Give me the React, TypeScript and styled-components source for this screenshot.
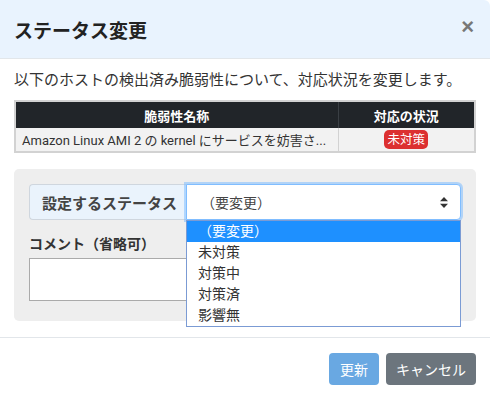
import React from 'react'
import styled, { createGlobalStyle } from 'styled-components'

const GlobalStyle = createGlobalStyle`
    * { box-sizing: border-box; }
    body {
        margin: 0;
        background: #fff;
        font-family: Roboto, "Noto Sans CJK JP", sans-serif;
        color: #333;
    }
`

const Modal = styled.div`
    width: 490px;
    height: 399px;
    background: #fff;
    border-top-right-radius: 6px;
    overflow: hidden;
`

const Header = styled.div`
    height: 59px;
    padding: 0 14px;
    display: flex;
    align-items: center;
    justify-content: space-between;
    background: #e9f3fe;
    border-bottom: 1px solid #e2e6ea;
`

const Title = styled.h5`
    margin: 0;
    font-size: 19px;
    font-weight: 700;
    color: #222;
    font-family: "Noto Sans CJK JP", sans-serif;
`

const Close = styled.span`
    font-size: 22px;
    font-weight: 700;
    color: #777;
    line-height: 1;
    margin-right: 2px;
    margin-top: -4px;
    font-family: "Liberation Sans", sans-serif;
`

const Body = styled.div`
    padding: 10px 14px 16px;
`

const Lead = styled.p`
    margin: 0 0 9px;
    font-size: 15px;
    line-height: 22px;
    color: #333;
`

const Table = styled.table`
    width: 100%;
    border-collapse: collapse;
    border: 2px solid #d2d2d2;
    font-size: 13px;
`

const Th = styled.th<{ w?: number }>`
    background: #212529;
    color: #fff;
    font-weight: 700;
    height: 27px;
    padding: 0 6px;
    text-align: center;
    border-right: 1px solid #3a3f44;
    width: ${p => (p.w ? `${p.w}px` : 'auto')};
    &:last-child { border-right: none; }
`

const Td = styled.td<{ center?: boolean }>`
    background: #f2f2f2;
    height: 24px;
    padding: 0 6px;
    color: #333;
    text-align: ${p => (p.center ? 'center' : 'left')};
    border-right: 1px solid #d2d2d2;
    white-space: nowrap;
    &:last-child { border-right: none; }
`

const Badge = styled.span`
    display: inline-block;
    background: #dc3030;
    color: #fff;
    font-size: 12.5px;
    line-height: 19px;
    padding: 0 3px;
    border-radius: 5px;
    vertical-align: middle;
`

const Panel = styled.div`
    margin-top: 16px;
    background: #eeeeee;
    border-radius: 5px;
    padding: 15px 15px 20px;
`

const InputGroup = styled.div`
    display: flex;
    height: 36px;
`

const GroupLabel = styled.div`
    width: 157px;
    display: flex;
    align-items: center;
    padding-left: 12px;
    background: #eaf3fc;
    border: 1px solid #cfd6de;
    border-right: none;
    border-radius: 4px 0 0 4px;
    font-size: 15px;
    font-weight: 700;
    color: #444;
`

const SelectBox = styled.div`
    position: relative;
    flex: 1;
    display: flex;
    align-items: center;
    justify-content: space-between;
    padding: 0 12px 0 14px;
    background: #fff;
    border: 1px solid #80bdff;
    border-radius: 0 4px 4px 0;
    box-shadow: 0 0 0 2px rgba(128, 189, 255, 0.55);
    font-size: 14px;
    color: #444;
`

const Dropdown = styled.ul`
    position: absolute;
    top: 100%;
    left: -1px;
    right: -1px;
    margin: 1px 0 0;
    padding: 0;
    list-style: none;
    background: #fff;
    border: 1px solid #7b9bd4;
    z-index: 10;
`

const Option = styled.li<{ active?: boolean }>`
    height: 21px;
    line-height: 21px;
    padding-left: 11px;
    font-size: 14px;
    color: ${p => (p.active ? '#fff' : '#333')};
    background: ${p => (p.active ? '#1e90ff' : '#fff')};
`

const FieldLabel = styled.div`
    margin-top: 14px;
    font-size: 14px;
    font-weight: 700;
    line-height: 21px;
    color: #333;
`

const TextArea = styled.div`
    margin-top: 3px;
    height: 43px;
    background: #fff;
    border: 1px solid #aaaaaa;
`

const Footer = styled.div`
    border-top: 1px solid #e2e6ea;
    padding: 15px 14px;
    display: flex;
    justify-content: flex-end;
    gap: 7px;
`

const Button = styled.button<{ variant: 'primary' | 'secondary' }>`
    height: 32px;
    padding: 0 ${p => (p.variant === 'primary' ? '11px' : '10px')};
    border: none;
    border-radius: 4px;
    font-size: 14px;
    font-family: "Noto Sans CJK JP", sans-serif;
    color: #fff;
    background: ${p => (p.variant === 'primary' ? '#69a8e2' : '#6c757d')};
`

const Arrows = () => (
    <svg width="8" height="11" viewBox="0 0 8 11">
        <path d="M4 0 L8 4.2 H0 Z" fill="#333" />
        <path d="M4 11 L8 6.8 H0 Z" fill="#333" />
    </svg>
)

const statuses = ['（要変更）', '未対策', '対策中', '対策済', '影響無']

const App = () => {
    return (
        <>
            <GlobalStyle />
            <Modal>
                <Header>
                    <Title>ステータス変更</Title>
                    <Close>×</Close>
                </Header>
                <Body>
                    <Lead>以下のホストの検出済み脆弱性について、対応状況を変更します。</Lead>
                    <Table>
                        <thead>
                            <tr>
                                <Th>脆弱性名称</Th>
                                <Th w={137}>対応の状況</Th>
                            </tr>
                        </thead>
                        <tbody>
                            <tr>
                                <Td>Amazon Linux AMI 2 の kernel にサービスを妨害さ...</Td>
                                <Td center><Badge>未対策</Badge></Td>
                            </tr>
                        </tbody>
                    </Table>
                    <Panel>
                        <InputGroup>
                            <GroupLabel>設定するステータス</GroupLabel>
                            <SelectBox>
                                <span>（要変更）</span>
                                <Arrows />
                                <Dropdown>
                                    {statuses.map((s, i) => (
                                        <Option key={s} active={i === 0}>{s}</Option>
                                    ))}
                                </Dropdown>
                            </SelectBox>
                        </InputGroup>
                        <FieldLabel>コメント（省略可）</FieldLabel>
                        <TextArea />
                    </Panel>
                </Body>
                <Footer>
                    <Button variant="primary">更新</Button>
                    <Button variant="secondary">キャンセル</Button>
                </Footer>
            </Modal>
        </>
    )
}

export default App
